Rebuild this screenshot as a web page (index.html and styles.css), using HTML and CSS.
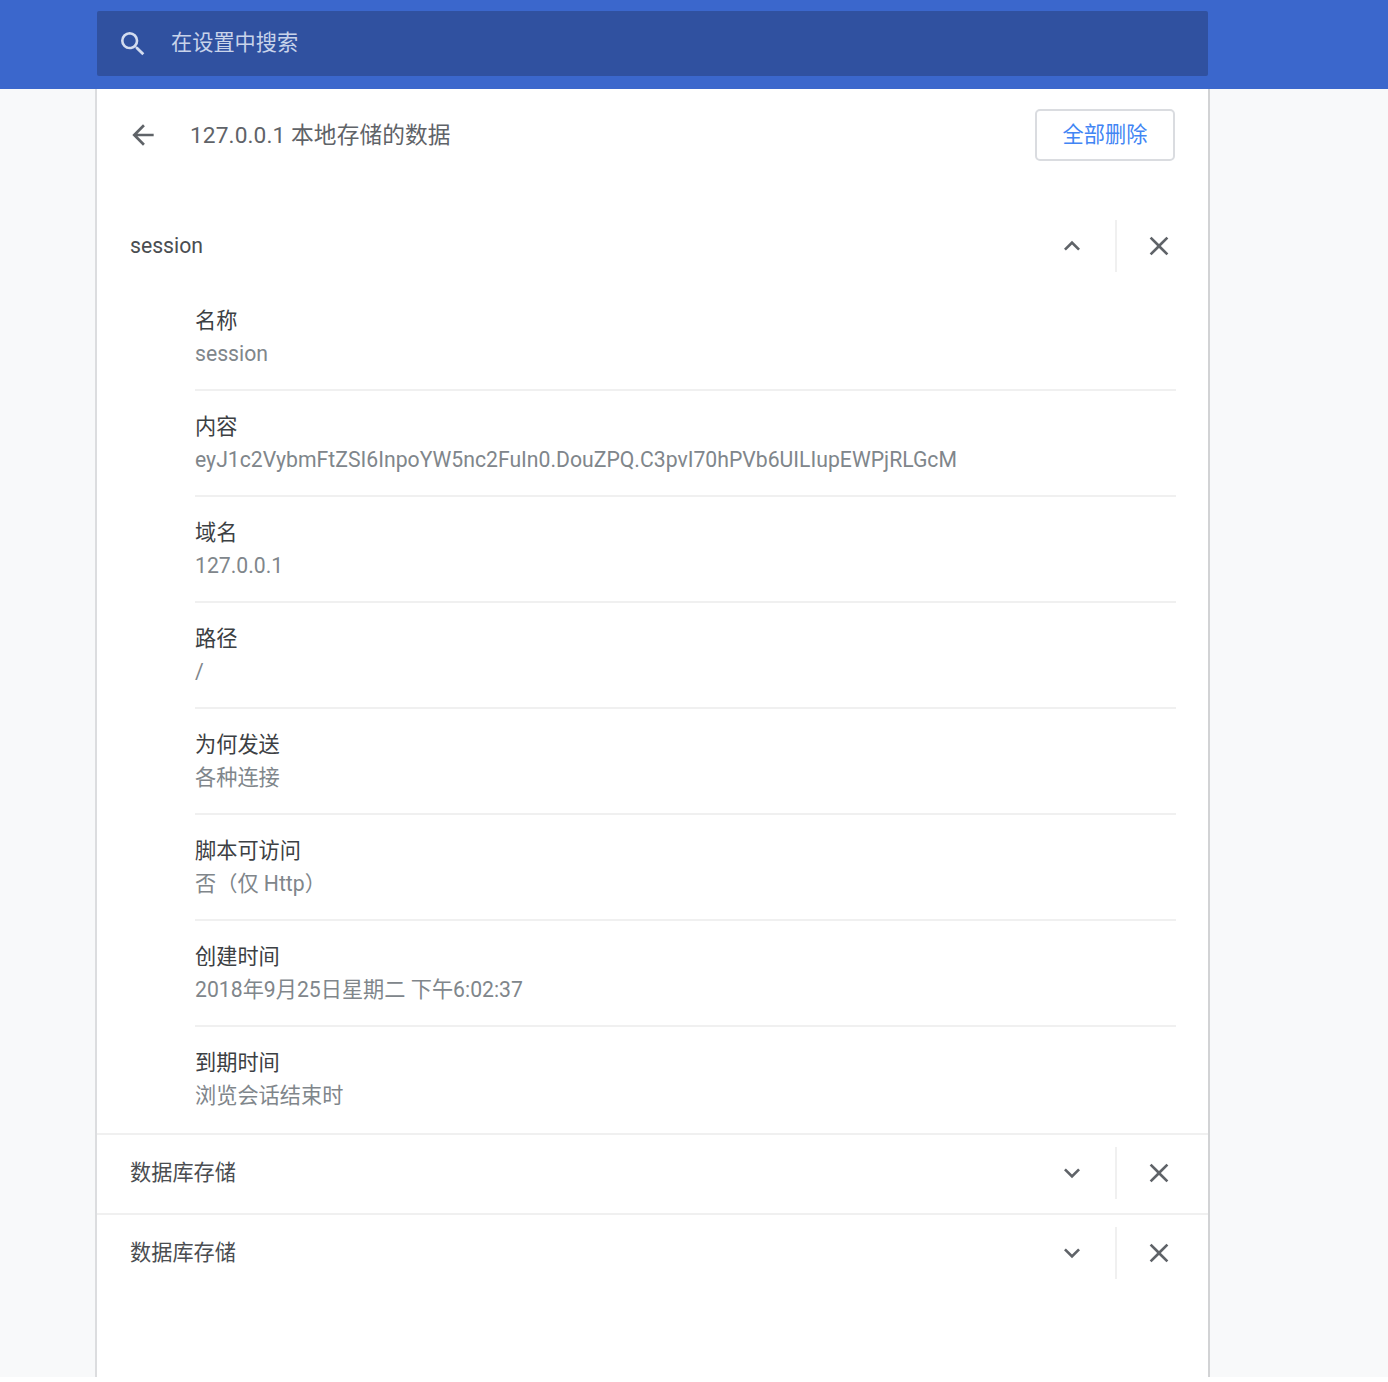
FILE: index.html
```html
<!DOCTYPE html>
<html lang="zh-CN">
<head>
    <meta charset="UTF-8">
    <title>设置</title>
    <link rel="stylesheet" href="styles.css">
</head>
<body>
    <div class="page">
        <div class="toolbar">
            <div class="search">
                <svg class="search-icon" viewBox="0 0 24 24" width="32" height="32"><path d="M15.5 14h-.79l-.28-.27A6.47 6.47 0 0 0 16 9.5 6.5 6.5 0 1 0 9.5 16c1.61 0 3.09-.59 4.23-1.57l.27.28v.79l5 4.99L20.49 19l-4.99-5zm-6 0C7.01 14 5 11.99 5 9.5S7.01 5 9.5 5 14 7.01 14 9.5 11.99 14 9.5 14z"/></svg>
                <span class="search-text">在设置中搜索</span>
            </div>
        </div>

        <div class="card">
            <div class="title-row">
                <svg class="back-icon" viewBox="0 0 24 24" width="32" height="32"><path d="M20 11H7.83l5.59-5.59L12 4l-8 8 8 8 1.41-1.41L7.83 13H20v-2z"/></svg>
                <span class="title">127.0.0.1 本地存储的数据</span>
                <button class="remove-all">全部删除</button>
            </div>

            <div class="item-head first">
                <span class="item-name">session</span>
                <svg class="chevron" viewBox="0 0 24 24" width="32" height="32"><path d="M7.41 15.41 12 10.83l4.59 4.58L18 14l-6-6-6 6z"/></svg>
                <span class="sep"></span>
                <svg class="close" viewBox="0 0 24 24" width="32" height="32"><path d="M19 6.41 17.59 5 12 10.59 6.41 5 5 6.41 10.59 12 5 17.59 6.41 19 12 13.41 17.59 19 19 17.59 13.41 12z"/></svg>
            </div>

            <div class="details">
                <div class="detail"><div class="label">名称</div><div class="value">session</div></div>
                <div class="detail"><div class="label">内容</div><div class="value">eyJ1c2VybmFtZSI6InpoYW5nc2FuIn0.DouZPQ.C3pvI70hPVb6UILIupEWPjRLGcM</div></div>
                <div class="detail"><div class="label">域名</div><div class="value">127.0.0.1</div></div>
                <div class="detail"><div class="label">路径</div><div class="value">/</div></div>
                <div class="detail"><div class="label">为何发送</div><div class="value">各种连接</div></div>
                <div class="detail"><div class="label">脚本可访问</div><div class="value">否（仅 Http）</div></div>
                <div class="detail"><div class="label">创建时间</div><div class="value">2018年9月25日星期二 下午6:02:37</div></div>
                <div class="detail"><div class="label">到期时间</div><div class="value">浏览会话结束时</div></div>
            </div>

            <div class="item-head">
                <span class="item-name">数据库存储</span>
                <svg class="chevron" viewBox="0 0 24 24" width="32" height="32"><path d="M7.41 8.59 12 13.17l4.59-4.58L18 10l-6 6-6-6z"/></svg>
                <span class="sep"></span>
                <svg class="close" viewBox="0 0 24 24" width="32" height="32"><path d="M19 6.41 17.59 5 12 10.59 6.41 5 5 6.41 10.59 12 5 17.59 6.41 19 12 13.41 17.59 19 19 17.59 13.41 12z"/></svg>
            </div>
            <div class="item-head">
                <span class="item-name">数据库存储</span>
                <svg class="chevron" viewBox="0 0 24 24" width="32" height="32"><path d="M7.41 8.59 12 13.17l4.59-4.58L18 10l-6 6-6-6z"/></svg>
                <span class="sep"></span>
                <svg class="close" viewBox="0 0 24 24" width="32" height="32"><path d="M19 6.41 17.59 5 12 10.59 6.41 5 5 6.41 10.59 12 5 17.59 6.41 19 12 13.41 17.59 19 19 17.59 13.41 12z"/></svg>
            </div>
        </div>
    </div>
</body>
</html>
```

FILE: styles.css
```css
* {
    padding: 0;
    margin: 0;
    box-sizing: border-box;
}

html, body {
    background: #fff;
}

body {
    height: 1382px;
    overflow: hidden;
    font-family: Roboto, "Noto Sans CJK SC", sans-serif;
    font-size: 21.2px;
    color: #5f6368;
}

.page {
    height: 1377px;
    background: #f8f9fa;
    display: flex;
    flex-direction: column;
}

.toolbar {
    height: 89px;
    flex: none;
    background: #3b67cc;
    padding: 11px 180px 0 97px;
}

.search {
    height: 65px;
    background: #3051a0;
    border-radius: 2px;
    display: flex;
    align-items: center;
    padding-left: 20px;
}

.search-icon {
    fill: #d3dcef;
}

.search-text {
    margin-left: 22px;
    margin-bottom: 6px;
    color: #c8d3ea;
}

.card {
    flex: 1;
    width: 1115px;
    margin-left: 95px;
    background: #fff;
    border-left: 2px solid #dcdddf;
    border-right: 2px solid #d2d3d5;
}

.title-row {
    height: 91px;
    display: flex;
    align-items: center;
    padding: 0 33px 0 30px;
}

.back-icon {
    fill: #5f6368;
}

.title {
    margin-left: 31px;
    margin-bottom: 2px;
    flex: 1;
    font-size: 22.7px;
    letter-spacing: 0.1px;
}

.remove-all {
    width: 140px;
    height: 52px;
    padding-bottom: 4px;
    background: #fff;
    border: 2px solid #dadce0;
    border-radius: 5px;
    font: inherit;
    color: #4285f4;
}

.item-head {
    height: 80px;
    display: flex;
    align-items: center;
    padding: 0 33px 2px 33px;
    border-top: 2px solid #f0f0f0;
    color: #4a4d51;
}

.item-head.first {
    margin-top: 36px;
    height: 60px;
    padding-bottom: 0;
    border-top: none;
}

.item-name {
    flex: 1;
    margin-bottom: 6px;
}

.first .item-name {
    margin-bottom: 2px;
}

.chevron {
    fill: #5f6368;
}

.sep {
    width: 2px;
    height: 52px;
    margin: 0 26px 0 27px;
    background: #f0f0f0;
}

.close {
    fill: #5f6368;
}

.details {
    padding: 9px 32px 0 98px;
}

.detail {
    height: 106px;
    padding-top: 19px;
    border-bottom: 2px solid #f0f0f0;
    line-height: 33px;
}

.detail:last-child {
    border-bottom: none;
}

.label {
    color: #3c4043;
}

.value {
    color: #80868b;
}
```
